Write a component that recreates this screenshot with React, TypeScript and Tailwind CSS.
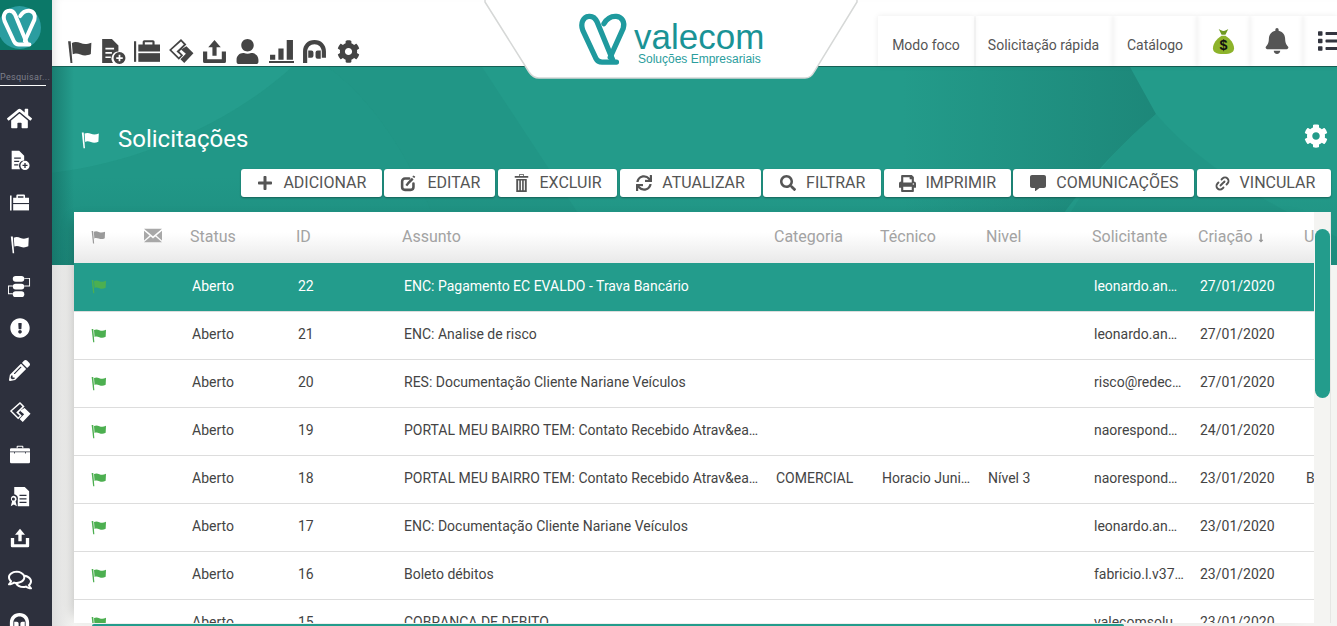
import {
  FaBell,
  FaCog,
  FaCommentAlt,
  FaExclamationCircle,
  FaHome,
  FaList,
  FaLongArrowAltDown,
  FaPencilAlt,
  FaPlus,
  FaPrint,
  FaRegComments,
  FaSearch,
  FaSync,
  FaUser,
} from "react-icons/fa";
import { Link2 } from "lucide-react";

type IconProps = { className?: string };

const Flag = ({ className }: IconProps) => (
  <svg viewBox="0 0 24 24" className={className} fill="currentColor">
    <path d="M1 3h2.400l1.600 20H3.200z" />
    <path d="M4.500 4.500c3-1.500 5.500-.8 8 .2 3 1.200 6 1.200 10-.4l-.5 10.500c-3.500 1.700-6.500 1.700-9.500.5-2.600-1-4.800-1.500-7.200-.3z" />
  </svg>
);

const FileAdd = ({ className }: IconProps) => (
  <svg viewBox="0 0 24 24" className={className} fill="currentColor">
    <path fillRule="evenodd" d="M2 1h9l6 6v5.500a6.500 6.500 0 0 0-5 10.500H2zm3 8v1.500h8V9zm0 4v1.500h6V13zm0 4v1.500h5V17z" />
    <path fillRule="evenodd" d="M18 13a5.500 5.500 0 1 1 0 11 5.500 5.500 0 0 1 0-11zm-.8 2.500v2.200H15v1.600h2.200v2.200h1.600v-2.200H21v-1.600h-2.200v-2.200z" />
  </svg>
);

const Case = ({ className }: IconProps) => (
  <svg viewBox="0 0 24 24" className={className} fill="currentColor">
    <path d="M0 3h2v19H0z" />
    <path fillRule="evenodd" d="M4 6h4V3.500A1.500 1.500 0 0 1 9.500 2h8A1.500 1.500 0 0 1 19 3.500V6h5v6.500H4zm6-2v2h7V4z" />
    <path d="M4 14h20v8H4z" />
  </svg>
);

const Diamond = ({ className }: IconProps) => (
  <svg viewBox="0 0 24 24" className={className} fill="currentColor">
    <path fillRule="evenodd" d="M12 1l5 5-6.500 6.500L14 16l-4 4-9-9zM12 3.200L3.200 11l6.800 6.800 1.800-1.800-4-3.500 6.800-6.500z" />
    <path d="M17 7.500l6.500 6.500-8.500 9-3.500-3.500 5-5-4.500-3.800z" />
  </svg>
);

const Upload = ({ className }: IconProps) => (
  <svg viewBox="0 0 24 24" className={className} fill="currentColor">
    <path d="M12 1l6 7h-4v8h-4V8H6z" />
    <path d="M1 12h4v7.500h14V12h4v9.500a1.500 1.500 0 0 1-1.500 1.500h-19A1.500 1.500 0 0 1 1 21.500z" />
  </svg>
);

const Bars = ({ className }: IconProps) => (
  <svg viewBox="0 0 24 24" className={className} fill="currentColor">
    <path d="M0 21h24v2H0zM1 15h5v5H1zM9 9h5v11H9zM17 1h6v19h-6z" />
  </svg>
);

const Headset = ({ className }: IconProps) => (
  <svg viewBox="0 0 24 24" className={className} fill="currentColor">
    <path fillRule="evenodd" d="M12 1c6.600 0 11 4.600 11 11v6h-4v-6c0-4-3-7-7-7s-7 3-7 7v11H1V12C1 5.600 5.400 1 12 1z" />
    <path d="M6 11h3a2 2 0 0 1 2 2v3a2 2 0 0 1-2 2H6zM15 11h3v8h-3a2 2 0 0 1-2-2v-4a2 2 0 0 1 2-2z" />
  </svg>
);

const Flow = ({ className }: IconProps) => (
  <svg viewBox="0 0 24 24" className={className} fill="currentColor">
    <rect x="5" y="1" width="12" height="6" rx="3" />
    <rect x="5" y="9" width="12" height="6" rx="3" />
    <rect x="5" y="17" width="12" height="6" rx="3" />
    <path d="M17 3h6v9h-6v-1h5V4h-5zM5 11H0v9h5v-1H1v-7h4z" />
  </svg>
);

const Cert = ({ className }: IconProps) => (
  <svg viewBox="0 0 24 24" className={className} fill="currentColor">
    <path fillRule="evenodd" d="M6 1h12l5 5v17H10v-7a5 5 0 0 0-4-6.500zm6 9v1.500h8V10zm0 4v1.500h8V14zm0 4v1.500h8V18z" />
    <path fillRule="evenodd" d="M5 11a3.800 3.800 0 0 1 2.500 6.600L9 23l-3.500-2L2 23l1.500-5.400A3.800 3.800 0 0 1 5 11zm0 2a1.800 1.800 0 1 0 0 3.600A1.800 1.800 0 0 0 5 13z" />
  </svg>
);

const Briefcase = ({ className }: IconProps) => (
  <svg viewBox="0 0 24 24" className={className} fill="currentColor">
    <path fillRule="evenodd" d="M8 5V3a1 1 0 0 1 1-1h6a1 1 0 0 1 1 1v2H8zm1.200 0h5.600V3.200H9.200z" />
    <path d="M1.500 5h21A1.500 1.500 0 0 1 24 6.500V9H0V6.500A1.500 1.500 0 0 1 1.500 5z" />
    <path d="M0 10h5v1.500h1V10h12v1.500h1V10h5v11.500a1.500 1.500 0 0 1-1.500 1.500h-21A1.500 1.500 0 0 1 0 21.500z" />
  </svg>
);

const Mail = ({ className }: IconProps) => (
  <svg viewBox="0 0 24 20" className={className} fill="currentColor">
    <path d="M0 1h24L12 11z" />
    <path d="M0 3.500l7.500 6.500L0 16.500zM24 3.500v13L16.500 10z" />
    <path d="M8.800 11.200L12 14l3.200-2.800L24 19H0z" />
  </svg>
);

const EditBox = ({ className }: IconProps) => (
  <svg viewBox="0 0 24 24" className={className} fill="none" stroke="currentColor">
    <path strokeWidth="3.600" strokeLinecap="round" d="M13 5H7a4 4 0 0 0-4 4v8a4 4 0 0 0 4 4h8a4 4 0 0 0 4-4v-5" />
    <path strokeWidth="3.400" d="M9 15l3-4 6-6" />
    <path strokeWidth="3.400" d="M20 1.500l-1 2" />
  </svg>
);

const Trash = ({ className }: IconProps) => (
  <svg viewBox="0 0 20 24" className={className} fill="currentColor">
    <path fillRule="evenodd" d="M7 0h6v2.500h6V5H1V2.500h6zm1 1v1.500h4V1z" />
    <path d="M3 6.500h14V24H3zM5.500 8.500v13h1.500v-13zM9.200 8.500v13h1.600v-13zM13 8.500v13h1.500v-13z" fillRule="evenodd" />
  </svg>
);

const MoneyBag = ({ className }: IconProps) => (
  <svg viewBox="0 0 24 28" className={className}>
    <path fill="#6f9a22" d="M7 1c2 1 3 2 5 2s3-1 5-2l-3 6h-4z" />
    <path fill="#8db32b" d="M10 8h4c5 3 9 8 9 13 0 4-3 6-11 6S1 25 1 21c0-5 4-10 9-13z" />
    <text x="12" y="23" textAnchor="middle" fontSize="15" fontWeight="700" fill="#111" fontFamily="'Liberation Sans', sans-serif">
      $
    </text>
  </svg>
);

const Logo = ({ className, color }: IconProps & { color: string }) => (
  <svg viewBox="0 0 52 54" className={className} fill="none" stroke={color} strokeWidth="5.500" strokeLinecap="round" strokeLinejoin="round">
    <path d="M40 51H25c-3 0-5-1-6.500-4L5 18C2 10 6 4 11 3.500c4-.5 7 1.500 9 6L37 51" />
    <path d="M27 11c3-5 8-8 13-7.500 6 .8 9 6 7 12.500L33.500 46" />
  </svg>
);

const sideIcons = [
  <FaHome className="w-[25px] h-[23px]" />,
  <FileAdd className="w-[20px] h-[20px]" />,
  <Case className="w-[19px] h-[19px]" />,
  <Flag className="w-[20px] h-[20px]" />,
  <Flow className="w-[23px] h-[23px]" />,
  <FaExclamationCircle className="w-[20px] h-[20px]" />,
  <FaPencilAlt className="w-[21px] h-[21px]" />,
  <Diamond className="w-[22px] h-[22px]" />,
  <Briefcase className="w-[22px] h-[20px]" />,
  <Cert className="w-[21px] h-[21px]" />,
  <Upload className="w-[20px] h-[20px]" />,
  <FaRegComments className="w-[24px] h-[22px]" />,
  <Headset className="w-[21px] h-[21px]" />,
];

const topIcons = [
  <Flag className="w-[26px] h-[26px]" />,
  <FileAdd className="w-[26px] h-[26px]" />,
  <Case className="w-[26px] h-[26px]" />,
  <Diamond className="w-[26px] h-[26px]" />,
  <Upload className="w-[25px] h-[25px]" />,
  <FaUser className="w-[25px] h-[25px]" />,
  <Bars className="w-[25px] h-[25px]" />,
  <Headset className="w-[25px] h-[25px]" />,
  <FaCog className="w-[23px] h-[23px]" />,
];

const buttons = [
  { label: "ADICIONAR", width: "w-[141px]", icon: <FaPlus className="w-[16px] h-[16px]" />, gap: "gap-[10px]" },
  { label: "EDITAR", width: "w-[111px]", icon: <EditBox className="w-[17px] h-[17px]" />, gap: "gap-[10px]" },
  { label: "EXCLUIR", width: "w-[119px]", icon: <Trash className="w-[15px] h-[18px]" />, gap: "gap-[10px]" },
  { label: "ATUALIZAR", width: "w-[141px]", icon: <FaSync className="w-[16px] h-[16px]" />, gap: "gap-[10px]" },
  { label: "FILTRAR", width: "w-[118px]", icon: <FaSearch className="w-[16px] h-[16px]" />, gap: "gap-[10px]" },
  { label: "IMPRIMIR", width: "w-[127px]", icon: <FaPrint className="w-[17px] h-[17px]" />, gap: "gap-[9px]" },
  { label: "COMUNICAÇÕES", width: "w-[181px]", icon: <FaCommentAlt className="w-[16px] h-[16px]" />, gap: "gap-[10px]" },
  { label: "VINCULAR", width: "w-[134px]", icon: <Link2 className="w-[17px] h-[17px] -rotate-45" strokeWidth={2.600} />, gap: "gap-[9px]" },
];

const rows = [
  { id: "22", subject: "ENC: Pagamento EC EVALDO - Trava Bancário", requester: "leonardo.an…", date: "27/01/2020" },
  { id: "21", subject: "ENC: Analise de risco", requester: "leonardo.an…", date: "27/01/2020" },
  { id: "20", subject: "RES: Documentação Cliente Nariane Veículos", requester: "risco@redec…", date: "27/01/2020" },
  { id: "19", subject: "PORTAL MEU BAIRRO TEM: Contato Recebido Atrav&ea…", requester: "naorespond…", date: "24/01/2020" },
  { id: "18", subject: "PORTAL MEU BAIRRO TEM: Contato Recebido Atrav&ea…", category: "COMERCIAL", tech: "Horacio Juni…", level: "Nível 3", requester: "naorespond…", date: "23/01/2020", last: "B" },
  { id: "17", subject: "ENC: Documentação Cliente Nariane Veículos", requester: "leonardo.an…", date: "23/01/2020" },
  { id: "16", subject: "Boleto débitos", requester: "fabricio.l.v37…", date: "23/01/2020" },
  { id: "15", subject: "COBRANÇA DE DEBITO", requester: "valecomsolu…", date: "23/01/2020" },
];

const cols = "grid grid-cols-[56px_58px_106px_106px_372px_106px_106px_106px_106px_106px_12px]";

const App = () => {
  return (
    <div className="flex h-[626px] w-[1337px] overflow-hidden bg-[#f4f4f2] font-['Roboto',sans-serif]">
      <aside className="w-[52px] shrink-0 bg-[#2d303d] text-white overflow-hidden z-20">
        <div className="h-[50px] bg-[#0b7868] flex items-center overflow-hidden">
          <div className="ml-[-2px] mt-[4px] w-[43px] h-[43px] shrink-0 rounded-full bg-[#2b9da0] flex items-center justify-center">
            <Logo color="#ffffff" className="w-[37px] h-[39px]" />
          </div>
        </div>
        <div className="mt-[21px] w-[46px] h-[15px] border-b border-white text-[9px] leading-[13px] tracking-[0.3px] text-[#7d7f8a] whitespace-nowrap">
          Pesquisar...
        </div>
        <nav className="mt-[11px] flex flex-col w-[39px]">
          {sideIcons.map((icon, i) => (
            <div key={i} className="h-[42px] shrink-0 flex items-center justify-center">
              {icon}
            </div>
          ))}
        </nav>
      </aside>

      <main className="relative flex-1 min-w-0 overflow-hidden">
        {/* fundo verde com as formas */}
        <svg className="absolute left-0 top-[67px] w-[1285px] h-[198px]" viewBox="0 0 1285 198" preserveAspectRatio="none">
          <defs>
            <linearGradient id="wedge" x1="0" x2="1" y1="0" y2="0">
              <stop offset="0" stopColor="#1a7f72" stopOpacity="0" />
              <stop offset="1" stopColor="#1a7f72" stopOpacity="0.7" />
            </linearGradient>
            <linearGradient id="side" x1="0" x2="1" y1="0" y2="0">
              <stop offset="0" stopColor="#12695f" stopOpacity="0.6" />
              <stop offset="1" stopColor="#12695f" stopOpacity="0" />
            </linearGradient>
            <linearGradient id="foot" x1="0" x2="0" y1="0" y2="1">
              <stop offset="0" stopColor="#12695f" stopOpacity="0" />
              <stop offset="1" stopColor="#12695f" stopOpacity="0.55" />
            </linearGradient>
          </defs>
          <rect width="1285" height="198" fill="#239b8a" />
          <path d="M0 106 C90 95 180 55 240 0 L0 0Z" fill="#27a08f" opacity="0.5" />
          <path d="M0 106 C90 95 180 55 240 0 L276 0 C330 40 370 110 400 198 L0 198Z" fill="#1f9383" opacity="0.5" />
          <path d="M276 0 C330 40 370 110 400 198 L560 198 L430 0Z" fill="#1f8d7e" opacity="0.35" />
          <path d="M850 0 L1078 0 L1104 47 C1060 85 1020 130 993 175 L850 198Z" fill="url(#wedge)" />
          <path d="M1104 47 C1140 90 1200 130 1285 170 L1285 198 L993 198 C1020 130 1060 85 1104 47Z" fill="#1f9181" opacity="0.5" />
          <rect y="110" width="1285" height="88" fill="url(#foot)" opacity="0.45" />
          <rect width="22" height="198" fill="url(#side)" />
        </svg>

        {/* sombra da barra lateral abaixo do verde */}
        <div className="absolute left-0 top-[265px] bottom-0 w-[22px] bg-gradient-to-r from-[#dedede] to-[#f4f4f2]" />

        <header className="relative h-[67px] bg-white flex items-end justify-between border-b border-[#155f55] shadow-[inset_8px_0_8px_-6px_rgba(0,0,0,0.12)]">
          <div className="flex items-center h-[30px] pl-[11px] text-[#444444]">
            {topIcons.map((icon, i) => (
              <div key={i} className="w-[33.600px] h-[30px] flex items-center justify-center">
                {icon}
              </div>
            ))}
          </div>
          <div className="flex items-stretch h-[50px] text-[14px] text-[#555555]">
            <div className="w-[96px] mr-[2px] pt-[9px] flex items-center justify-center shadow-[0_0_6px_rgba(0,0,0,0.08)]">Modo foco</div>
            <div className="w-[137px] pt-[9px] pr-[2px] flex items-center justify-center shadow-[0_0_6px_rgba(0,0,0,0.08)]">Solicitação rápida</div>
            <div className="w-[84px] pt-[9px] flex items-center justify-center shadow-[0_0_6px_rgba(0,0,0,0.08)]">Catálogo</div>
            <div className="w-[53px] flex items-center justify-center shadow-[0_0_6px_rgba(0,0,0,0.08)]">
              <MoneyBag className="w-[23px] h-[27px]" />
            </div>
            <div className="w-[53px] flex items-center justify-center shadow-[0_0_6px_rgba(0,0,0,0.08)]">
              <FaBell className="w-[24px] h-[26px] text-[#555555]" />
            </div>
            <div className="w-[34px] pl-[15px] flex items-center overflow-hidden shadow-[0_0_6px_rgba(0,0,0,0.08)]">
              <FaList className="w-[24px] h-[24px] shrink-0 text-[#33353f]" />
            </div>
          </div>
        </header>

        {/* etiqueta central com o logotipo */}
        <div className="absolute left-[431px] top-0 w-[376px] h-[80px]">
          <svg className="absolute inset-0 w-full h-full" viewBox="0 0 376 80">
            <path d="M2 2 L46 72 Q50 78 56 78 L322 78 Q328 78 331 72 L374 2 L374 -2 L2 -2Z" fill="#ffffff" stroke="#d6d8d7" strokeWidth="1.500" />
          </svg>
          <Logo color="#1f9a9e" className="absolute left-[95px] top-[12px] w-[50px] h-[54px]" />
          <span className="absolute left-[151px] top-[20px] text-[35px] leading-[33px] text-[#1a9396] font-['Liberation_Sans',sans-serif]">valecom</span>
          <span className="absolute left-[155px] top-[53px] text-[12px] leading-[13px] text-[#2a9d9d] font-['Liberation_Sans',sans-serif]">Soluções Empresariais</span>
        </div>

        <div className="relative">
          <div className="h-[102px] flex items-start justify-between pt-[58px] pl-[29px] pr-[9px]">
            <div className="flex items-center h-[28px] text-white">
              <Flag className="w-[19px] h-[19px]" />
              <h1 className="ml-[18px] text-[24px] leading-[28px] font-normal">Solicitações</h1>
            </div>
            <FaCog className="w-[24px] h-[24px] mt-[-1px] text-white" />
          </div>

          <div className="h-[28px] flex justify-end gap-[2.600px] pr-[6px]">
            {buttons.map((b) => (
              <button
                key={b.label}
                className={`${b.width} ${b.gap} h-[28px] pl-[1px] flex items-center justify-center bg-white rounded-[3px] text-[16px] text-[#555555] shadow-[0_1px_2px_rgba(0,0,0,0.35)]`}
              >
                {b.icon}
                <span>{b.label}</span>
              </button>
            ))}
          </div>

          <div className="mt-[15px] ml-[22px] flex h-[411px]">
            <div className="w-[1240px] h-[411px] overflow-hidden bg-white shadow-[-8px_0_12px_-8px_rgba(0,0,0,0.25)]">
              <div className={`${cols} h-[51px] pb-[2px] items-center text-[16px] text-[#a3a3a3] bg-gradient-to-b from-white from-40% to-[#e9e9e9]`}>
                <div className="pl-[17px]">
                  <Flag className="w-[15px] h-[15px] text-[#9a9a9a]" />
                </div>
                <div className="pl-[14px] pb-[3px]">
                  <Mail className="w-[18px] h-[15px] text-[#a8a8a8]" />
                </div>
                <div className="pl-[2px]">Status</div>
                <div className="pl-[2px]">ID</div>
                <div className="pl-[2px]">Assunto</div>
                <div className="pl-[2px]">Categoria</div>
                <div className="pl-[2px]">Técnico</div>
                <div className="pl-[2px]">Nivel</div>
                <div className="pl-[2px]">Solicitante</div>
                <div className="pl-[2px] flex items-center gap-[3px]">
                  Criação
                  <FaLongArrowAltDown className="w-[10px] h-[10px] mt-[2px] text-[#999999]" />
                </div>
                <div className="pl-[2px] overflow-hidden">U</div>
              </div>
              {rows.map((r, i) => (
                <div
                  key={r.id}
                  className={`${cols} pb-[2px] items-center text-[14px] border-b border-[#dddddd] ${i === 0 ? "h-[49px] bg-[#239c8c] text-white" : "h-[48px] bg-white text-[#444444]"}`}
                >
                  <div className="pl-[17px]">
                    <Flag className="w-[16px] h-[16px] text-[#4caf50]" />
                  </div>
                  <div />
                  <div className="pl-[4px]">Aberto</div>
                  <div className="pl-[4px]">{r.id}</div>
                  <div className="pl-[4px] whitespace-nowrap">{r.subject}</div>
                  <div className="pl-[4px] whitespace-nowrap">{r.category}</div>
                  <div className="pl-[4px] whitespace-nowrap">{r.tech}</div>
                  <div className="pl-[4px] whitespace-nowrap">{r.level}</div>
                  <div className="pl-[4px] whitespace-nowrap">{r.requester}</div>
                  <div className="pl-[4px]">{r.date}</div>
                  <div className="pl-[4px] overflow-hidden">{r.last}</div>
                </div>
              ))}
            </div>
            <div className="w-[17px] bg-[#f4f4f2] border-r border-[#e6e6e4]" />
          </div>
        </div>

        {/* barras de rolagem */}
        <div className="absolute left-[1263px] top-[229px] w-[15px] h-[169px] rounded-[8px] bg-[#239c8c]" />
        <div className="absolute left-[40px] top-[624px] w-[1032px] h-[2px] rounded-t-[2px] bg-[#239c8c]" />
      </main>
    </div>
  );
};

export default App;
